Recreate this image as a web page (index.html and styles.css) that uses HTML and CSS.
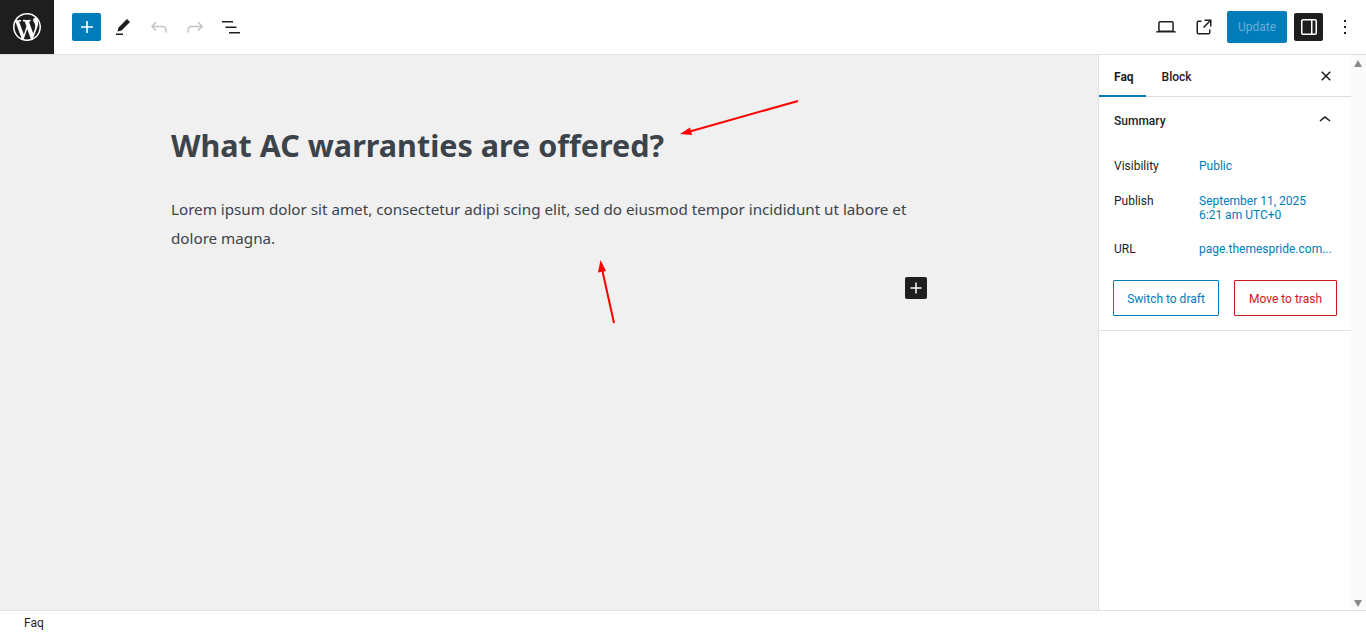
FILE: index.html
```html
<!DOCTYPE html>
<html lang="en">

<head>
    <meta charset="UTF-8">
    <meta name="viewport" content="width=device-width, initial-scale=1.0">
    <title>Edit Faq</title>
    <link rel="stylesheet" href="styles.css">
</head>

<body>
    <header class="topbar">
        <div class="logo">
            <svg width="28" height="28" viewBox="0 0 20 20" fill="currentColor">
                <path d="M20 10c0-5.51-4.49-10-10-10C4.48 0 0 4.49 0 10c0 5.52 4.48 10 10 10 5.51 0 10-4.48 10-10zM7.78 15.37L4.37 6.22c.55-.02 1.17-.08 1.17-.08.5-.06.44-1.13-.06-1.11 0 0-1.45.11-2.37.11-.18 0-.37 0-.58-.01C4.12 2.69 6.87 1.11 10 1.11c2.33 0 4.45.87 6.05 2.34-.68-.11-1.65.39-1.65 1.58 0 .74.45 1.36.9 2.1.35.61.55 1.36.55 2.46 0 1.49-1.4 5-1.4 5l-3.03-8.37c.54-.02.82-.17.82-.17.5-.05.44-1.25-.06-1.22 0 0-1.44.12-2.38.12-.87 0-2.33-.12-2.33-.12-.5-.03-.56 1.2-.06 1.22l.92.08 1.26 3.41zM17.41 10c.24-.64.74-1.87.43-4.25.7 1.29 1.05 2.71 1.05 4.25 0 3.29-1.73 6.24-4.4 7.78.97-2.59 1.94-5.2 2.92-7.78zM6.1 18.09C3.12 16.65 1.11 13.53 1.11 10c0-1.3.23-2.48.72-3.59C3.25 10.3 4.67 14.2 6.1 18.09zm4.03-6.63l2.58 6.98c-.86.29-1.76.45-2.71.45-.79 0-1.57-.11-2.29-.33.81-2.38 1.62-4.74 2.42-7.1z" />
            </svg>
        </div>

        <div class="tools">
            <button class="icon-btn icon-btn-primary">
                <svg width="24" height="24" viewBox="0 0 24 24" fill="currentColor">
                    <path d="M18 11.2h-5.2V6h-1.6v5.2H6v1.6h5.2V18h1.6v-5.2H18z" />
                </svg>
            </button>
            <button class="icon-btn">
                <svg width="24" height="24" viewBox="0 0 24 24" fill="currentColor">
                    <path d="m19 7-3-3-8.5 8.5-1 4 4-1L19 7Zm-7 11.5H5V20h7v-1.5Z" />
                </svg>
            </button>
            <button class="icon-btn icon-btn-disabled">
                <svg width="24" height="24" viewBox="0 0 24 24" fill="currentColor">
                    <path d="M18.3 11.7c-.6-.6-1.4-.9-2.3-.9H6.7l2.9-3.3-1.1-1-4.5 5L8.5 16l1-1-2.7-2.7H16c.5 0 .9.2 1.3.5 1 1 1 3.4 1 4.5v.3h1.5v-.2c0-1.5 0-4.3-1.5-5.7z" />
                </svg>
            </button>
            <button class="icon-btn icon-btn-disabled">
                <svg width="24" height="24" viewBox="0 0 24 24" fill="currentColor">
                    <path d="M15.6 6.5l-1.1 1 2.9 3.3H8c-.9 0-1.7.3-2.3.9-1.4 1.5-1.4 4.2-1.4 5.6v.2h1.5v-.3c0-1.1 0-3.5 1-4.5.3-.3.7-.5 1.3-.5h9.2L14.5 15l1.1 1.1 4.6-4.6-4.6-5z" />
                </svg>
            </button>
            <button class="icon-btn">
                <svg width="24" height="24" viewBox="0 0 24 24" fill="currentColor">
                    <path d="M3 6h11v1.5H3V6Zm3.5 5.5h11V13h-11v-1.5ZM21 17H10v1.5h11V17Z" />
                </svg>
            </button>
        </div>

        <div class="settings">
            <button class="icon-btn">
                <svg width="24" height="24" viewBox="0 0 24 24" fill="currentColor">
                    <path d="M20.5 16h-.7V8c0-1.1-.9-2-2-2H6.2c-1.1 0-2 .9-2 2v8h-.7c-.8 0-1.5.7-1.5 1.5h20c0-.8-.7-1.5-1.5-1.5zM5.7 8c0-.3.2-.5.5-.5h11.6c.3 0 .5.2.5.5v7.6H5.7V8z" />
                </svg>
            </button>
            <button class="icon-btn">
                <svg width="24" height="24" viewBox="0 0 24 24" fill="currentColor">
                    <path d="M19.5 4.5h-7V6h4.44l-5.97 5.97 1.06 1.06L18 7.06v4.44h1.5v-7Zm-13 1a2 2 0 0 0-2 2v10a2 2 0 0 0 2 2h10a2 2 0 0 0 2-2v-3H17v3a.5.5 0 0 1-.5.5h-10a.5.5 0 0 1-.5-.5v-10a.5.5 0 0 1 .5-.5h3V5.5h-3Z" />
                </svg>
            </button>
            <button class="update-btn">Update</button>
            <button class="icon-btn icon-btn-dark">
                <svg width="24" height="24" viewBox="0 0 24 24" fill="currentColor">
                    <path d="M18 4H6c-1.1 0-2 .9-2 2v12c0 1.1.9 2 2 2h12c1.1 0 2-.9 2-2V6c0-1.1-.9-2-2-2zm-4 14.5H6c-.3 0-.5-.2-.5-.5V6c0-.3.2-.5.5-.5h8v13zm4.5-.5c0 .3-.2.5-.5.5h-2.5v-13H18c.3 0 .5.2.5.5v12z" />
                </svg>
            </button>
            <button class="icon-btn icon-btn-more">
                <svg width="24" height="24" viewBox="0 0 24 24" fill="currentColor">
                    <path d="M13 19h-2v-2h2v2zm0-6h-2v-2h2v2zm0-6h-2V5h2v2z" />
                </svg>
            </button>
        </div>
    </header>

    <div class="workspace">
        <main class="canvas">
            <div class="post">
                <h1 class="post-title">What AC warranties are offered?</h1>
                <p class="post-text">Lorem ipsum dolor sit amet, consectetur adipi scing elit, sed do eiusmod tempor incididunt ut labore et dolore magna.</p>
            </div>
            <button class="appender">
                <svg width="24" height="24" viewBox="0 0 24 24" fill="currentColor">
                    <path d="M18 11.2h-5.2V6h-1.6v5.2H6v1.6h5.2V18h1.6v-5.2H18z" />
                </svg>
            </button>
            <svg class="arrows" width="1098" height="555" viewBox="0 0 1098 555">
                <g stroke="#f00" stroke-width="2">
                    <line x1="798" y1="46" x2="688" y2="77" />
                    <line x1="614" y1="268" x2="602" y2="214" />
                </g>
                <g fill="#f00">
                    <polygon points="680,79 690,72.500 692,80" />
                    <polygon points="600.500,205 606,216 598,217.500" />
                </g>
            </svg>
        </main>

        <aside class="sidebar">
            <div class="sidebar-inner">
                <div class="tabs">
                    <span class="tab tab-active">Faq</span>
                    <span class="tab">Block</span>
                    <svg class="tabs-close" width="24" height="24" viewBox="0 0 24 24" fill="currentColor">
                        <path d="M12 13.06l3.712 3.713 1.061-1.06L13.061 12l3.712-3.712-1.06-1.06L12 10.938 8.288 7.227l-1.061 1.06L10.939 12l-3.712 3.712 1.06 1.061L12 13.061z" />
                    </svg>
                </div>

                <section class="panel">
                    <div class="panel-head">
                        <h2 class="panel-title">Summary</h2>
                        <svg width="24" height="24" viewBox="0 0 24 24" fill="currentColor">
                            <path d="M6.5 12.4L12 8l5.5 4.4-.9 1.2L12 10l-4.5 3.6-1-1.2z" />
                        </svg>
                    </div>

                    <div class="row row-visibility">
                        <span class="row-label">Visibility</span>
                        <span class="row-value">Public</span>
                    </div>
                    <div class="row row-publish">
                        <span class="row-label">Publish</span>
                        <span class="row-value">September 11, 2025<br>6:21 am UTC+0</span>
                    </div>
                    <div class="row row-url">
                        <span class="row-label">URL</span>
                        <span class="row-value">page.themespride.com...</span>
                    </div>

                    <div class="panel-actions">
                        <button class="btn btn-draft">Switch to draft</button>
                        <button class="btn btn-trash">Move to trash</button>
                    </div>
                </section>
            </div>

            <div class="scrollbar">
                <span class="scroll-up"></span>
                <span class="scroll-down"></span>
            </div>
        </aside>
    </div>

    <footer class="statusbar">Faq</footer>
</body>

</html>
```

FILE: styles.css
```css
:root {
    --border: #e0e0e0;
    --accent: #007cba;
    --dark: #1e1e1e;
    --text: #3c434a;
}

* {
    margin: 0;
    padding: 0;
    box-sizing: border-box;
}

body {
    background: #fff;
    color: var(--dark);
    font-family: Roboto, "Noto Sans", sans-serif;
    font-size: 12px;
    height: 633px;
    display: flex;
    flex-direction: column;
    overflow: hidden;
}

button {
    font-family: inherit;
    background: none;
    border: none;
    cursor: pointer;
}

/* top bar */
.topbar {
    height: 55px;
    flex: none;
    display: flex;
    align-items: center;
    border-bottom: 1px solid var(--border);
}

.logo {
    width: 54px;
    height: 54px;
    background: var(--dark);
    color: #fff;
    display: flex;
    align-items: center;
    justify-content: center;
}

.tools {
    display: flex;
    align-items: center;
    gap: 7px;
    margin-left: 18px;
}

.settings {
    display: flex;
    align-items: center;
    margin-left: auto;
    padding-right: 9px;
}

.icon-btn {
    width: 29px;
    height: 28px;
    border-radius: 2px;
    color: var(--dark);
    display: flex;
    align-items: center;
    justify-content: center;
}

.icon-btn-primary {
    background: var(--accent);
    color: #fff;
}

.icon-btn-disabled {
    color: #c4c4c4;
}

.icon-btn-dark {
    background: var(--dark);
    color: #fff;
    margin-left: 7px;
}

.icon-btn-more {
    width: 24px;
    margin-left: 10px;
}

.settings .icon-btn:first-child {
    margin-right: 9px;
}

.update-btn {
    width: 60px;
    height: 32px;
    margin-left: 9px;
    border-radius: 2px;
    background: var(--accent);
    color: #69aed6;
    font-size: 12px;
}

/* editor */
.workspace {
    flex: 1;
    display: flex;
    min-height: 0;
}

.canvas {
    flex: 1;
    position: relative;
    background: #f0f0f0;
    padding: 70px 171px 0;
}

.post {
    width: 756px;
}

.post-title {
    color: var(--text);
    font-family: "Noto Sans", sans-serif;
    font-size: 30.5px;
    font-weight: 700;
    line-height: 40px;
    margin-bottom: 30px;
}

.post-text {
    color: var(--text);
    font-family: "Noto Sans", sans-serif;
    font-size: 15.2px;
    line-height: 29px;
}

.appender {
    position: absolute;
    left: 905px;
    top: 222px;
    width: 22px;
    height: 22px;
    border-radius: 2px;
    background: var(--dark);
    color: #fff;
    display: flex;
    align-items: center;
    justify-content: center;
}

.arrows {
    position: absolute;
    left: 0;
    top: 0;
}

/* sidebar */
.sidebar {
    width: 268px;
    flex: none;
    display: flex;
    border-left: 1px solid var(--border);
}

.sidebar-inner {
    flex: 1;
    min-width: 0;
}

.tabs {
    height: 42px;
    display: flex;
    align-items: center;
    padding: 2px 0 0 15px;
    gap: 28px;
    border-bottom: 1px solid #ddd;
    position: relative;
}

.tab {
    font-weight: 500;
    font-size: 12px;
}

.tab-active {
    font-weight: 700;
}

.tab-active::after {
    content: '';
    position: absolute;
    left: 0;
    bottom: -1px;
    width: 47px;
    height: 2px;
    background: var(--accent);
}

.tabs-close {
    position: absolute;
    right: 13px;
    top: 9px;
}

.panel {
    padding: 0 14px 14px;
    border-bottom: 1px solid var(--border);
}

.panel-head {
    height: 46px;
    display: flex;
    align-items: center;
    justify-content: space-between;
}

.panel-title {
    font-size: 12px;
    font-weight: 500;
    padding: 2px 0 0 1px;
}

.row {
    display: flex;
    line-height: 14px;
    padding-left: 1px;
}

.row-visibility {
    margin-top: 16px;
}

.row-publish {
    margin-top: 21px;
}

.row-url {
    margin-top: 20px;
}

.row-label {
    width: 85px;
    flex: none;
}

.row-value {
    color: var(--accent);
}

.panel-actions {
    display: flex;
    justify-content: space-between;
    margin-top: 24px;
}

.btn {
    height: 36px;
    padding-top: 1px;
    background: #fff;
    font-size: 12px;
    border-radius: 1px;
}

.btn-draft {
    width: 106px;
    color: var(--accent);
    border: 1px solid var(--accent);
}

.btn-trash {
    width: 103px;
    color: #cc1818;
    border: 1px solid #cc1818;
}

.scrollbar {
    width: 15px;
    flex: none;
    background: #fafafa;
    position: relative;
}

.scroll-up,
.scroll-down {
    position: absolute;
    left: 3px;
    width: 0;
    height: 0;
    border-left: 4.5px solid transparent;
    border-right: 4.5px solid transparent;
}

.scroll-up {
    top: 5px;
    border-bottom: 7px solid #8a8a8a;
}

.scroll-down {
    bottom: 3px;
    border-top: 7px solid #8a8a8a;
}

/* footer */
.statusbar {
    height: 23px;
    flex: none;
    border-top: 1px solid var(--border);
    padding-left: 24px;
    font-size: 12px;
    line-height: 24px;
    background: #fff;
}
```
